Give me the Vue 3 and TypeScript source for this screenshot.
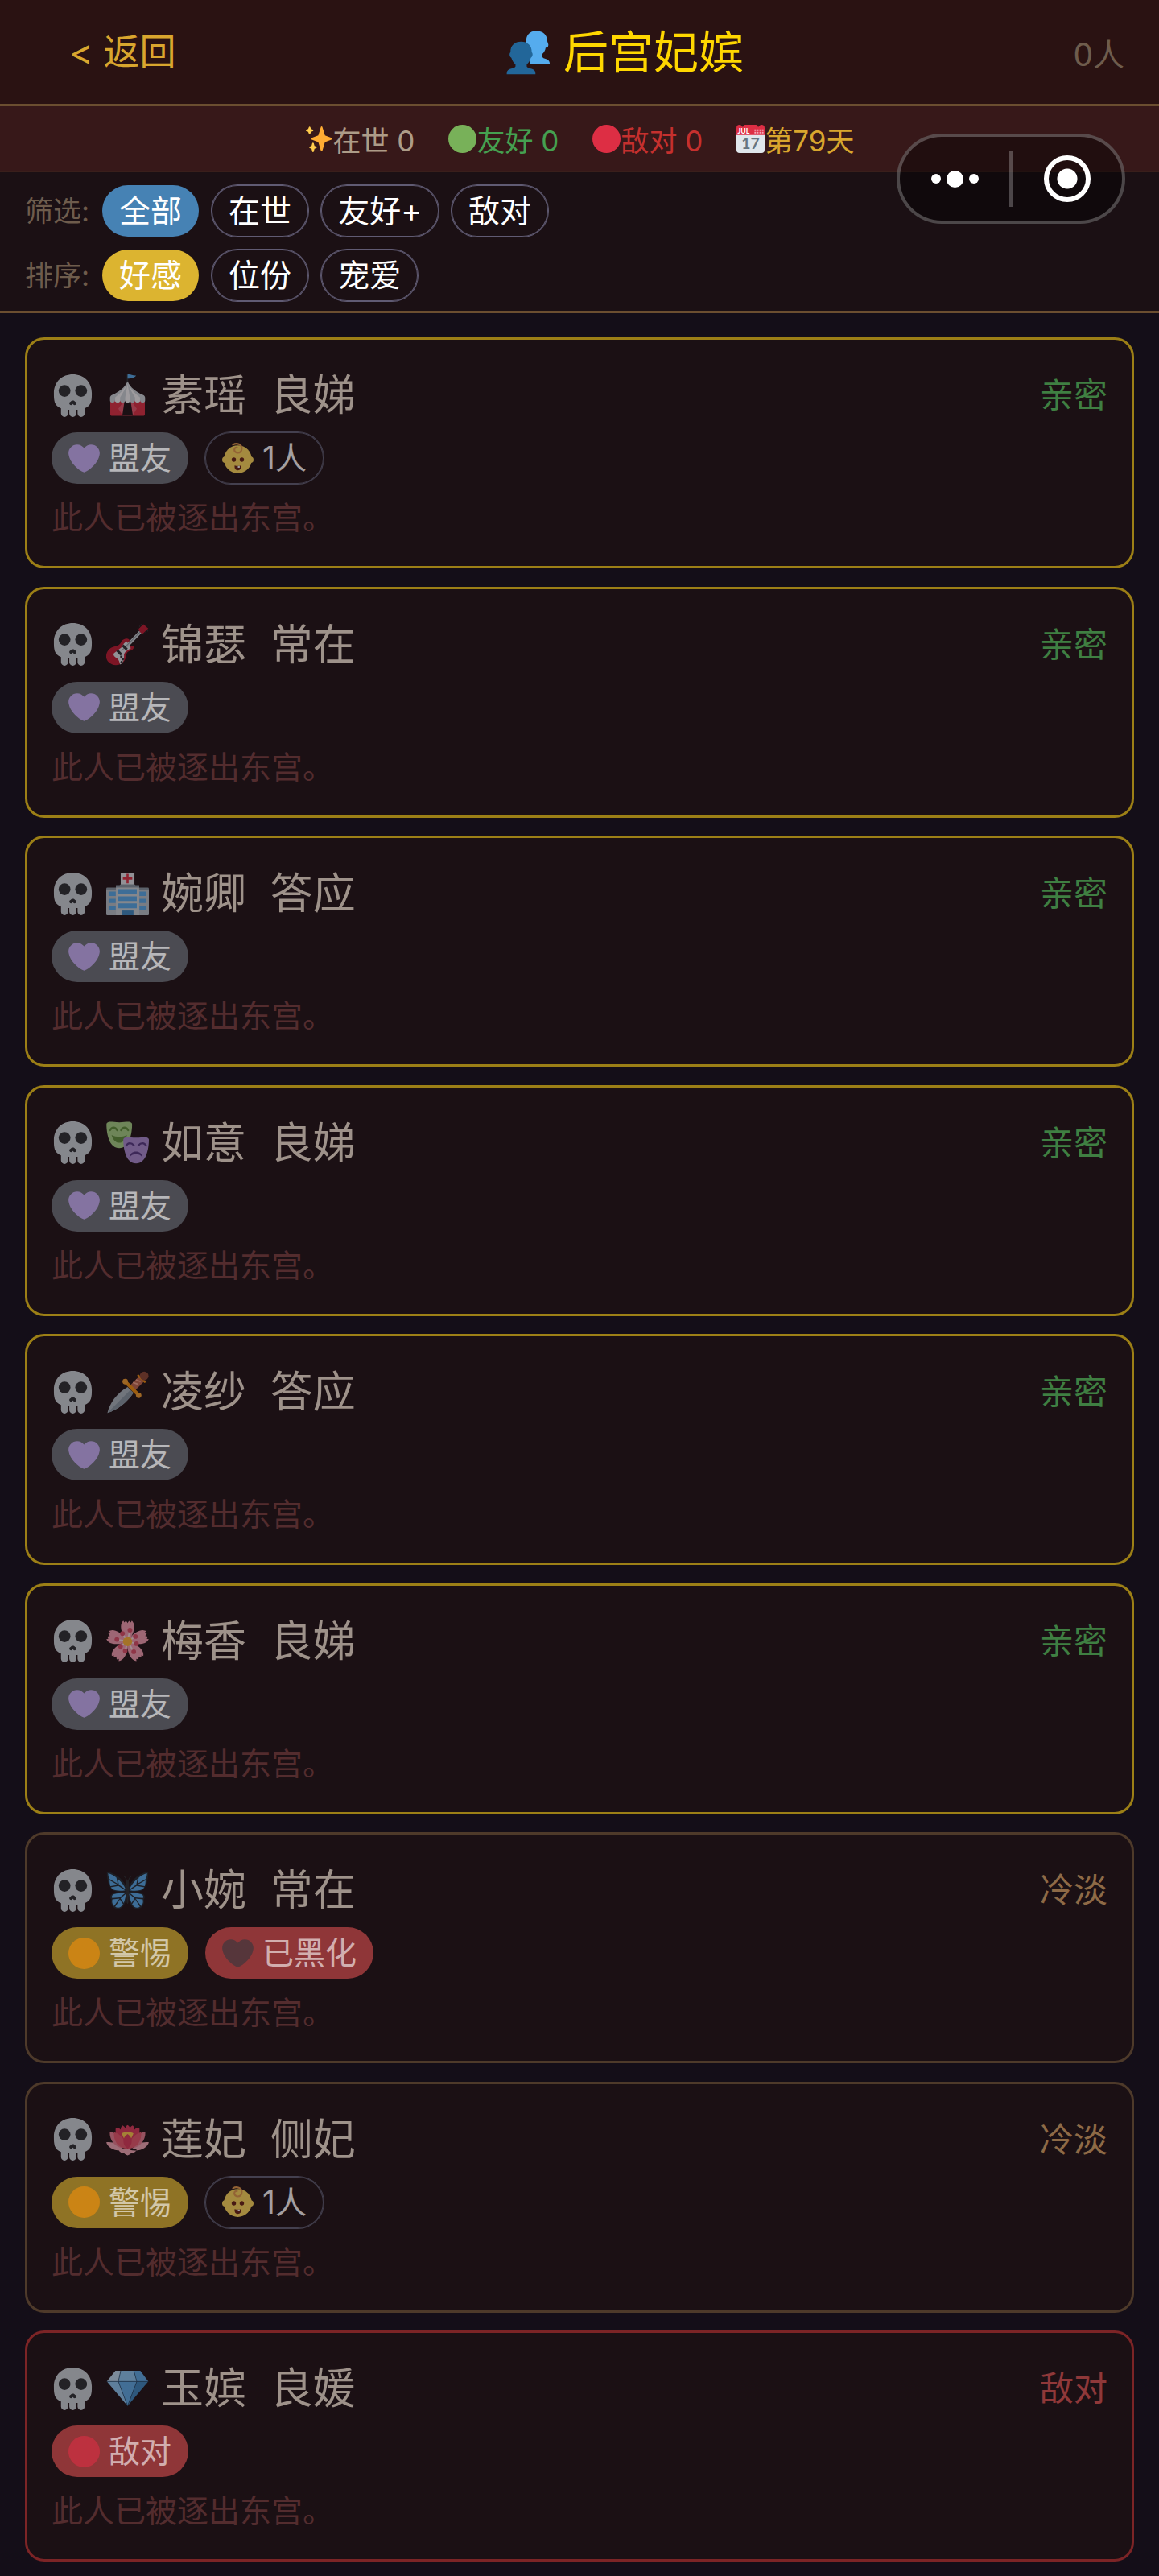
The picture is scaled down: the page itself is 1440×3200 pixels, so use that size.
<script setup lang="ts">
import { ref } from 'vue'

interface Tag {
  icon: string
  label: string
  tone: 'ally' | 'wary' | 'danger' | 'outline'
}

interface Consort {
  icon: string
  name: string
  rank: string
  mood: string
  level: 'close' | 'cold' | 'hostile'
  tags: Tag[]
}

const heart =
  'M35.885 11.833c0-5.45-4.418-9.868-9.867-9.868-3.308 0-6.227 1.633-8.018 4.129-1.791-2.496-4.71-4.129-8.017-4.129-5.45 0-9.868 4.417-9.868 9.868 0 .772.098 1.52.266 2.241C1.751 22.587 11.216 31.568 18 34.034c6.783-2.466 16.249-11.447 17.617-19.959.17-.721.268-1.469.268-2.242z'

const petal =
  'M18 18.5C13.500 14 11.500 7 12.800 3.400c.5-1.400 1-1.800 1.600-2.600l.9 1.500 1.200-1.300c.8.6 1.200 1 1.500 2 .3-1 .7-1.400 1.500-2l1.200 1.300.9-1.500c.6.8 1.100 1.200 1.600 2.600C24.500 7 22.500 14 18 18.500z'

const stamens = [
  [20, 8.8], [24.6, 14.2], [25.500, 20.300], [23.200, 27.100],
  [16, 26.400], [12, 22.500], [9, 16.700], [13.700, 11.700],
]

const wing = `
  <path fill="#1f2a33" d="M17.500 17.500C16.500 10 8 3 .6 2c-.3 5 1 14.500 6.600 16.500 3 .8 8 .4 10.300-.2z"/>
  <path fill="#1f2a33" d="M17.600 18.500c-4 .4-9 .6-12 1.800-2.800 1.500-2.400 4.400-1.200 5.200-1.200 3.500 1.200 8 5.600 8 4.500 0 6.800-6 7.600-12z"/>
  <g fill="#55acee">
    <path d="M1.600 3.400c2.800.7 5 2 7 3.700l1 5.200L2.500 8.200c-.6-1.600-.9-3.200-.9-4.800z"/>
    <path d="M9.600 7.900c3.200 2.800 5.800 6 6.700 9L10.700 13z"/>
    <path d="M2.800 9.400l7 3.900-6.300 1c-.5-1.600-.7-3.200-.7-4.900z"/>
    <path d="M3.900 15.200l6.400-1.100 5.600 3.800c-3 .5-6 .5-8.400-.2-1.700-.5-2.800-1.300-3.600-2.500z"/>
    <path d="M16.500 19.700l-5 4-6.500.6c-.7-1.400 0-2.600 1.500-3.200 2.500-1 6.500-1.100 10-1.400z"/>
    <path d="M5.200 25.500l6-.7-4.600 6.200c-1.500-1.400-2-3.500-1.400-5.500z"/>
    <path d="M16.700 20.800c-.5 3-1 5.500-2 7.700l-2.600-3.800z"/>
    <path d="M11.500 25.500l2.700 4c-1.600 2.800-4 3.700-6.600 2.300z"/>
  </g>`

const icons: Record<string, string> = {
  people: `
    <path fill="#55acee" d="M24.500 1C19.500 1 16.500 4 16.500 9.500L20 27.300h15.400c0-2.600-1.500-3.600-4.500-4.400-1-.4-1.800-1-1.600-3.400 1.400-1.400 2.500-3 2.800-5.200 1.400 0 2-.6 2.100-1.600C34.700 11.500 33.400 10 33.300 8.500 33.300 4 30 1 24.500 1z"/>
    <path fill="#226699" d="M12.500 9.500c-5 0-8.700 3-8.500 8.500-1 .5-1 3.500.7 4.300.8 2.500 1.900 4.200 3.300 5.400v1.600c-.5 1.200-2.800 1.400-4.800 2.200-1.700.7-2.200 2-2.200 4h23c0-2-.5-3.300-2.200-4-2-.8-4.300-1-4.800-2.200v-1.600c1.400-1.200 2.500-2.900 3.300-5.400 1.700-.8 1.700-3.800.7-4.300.2-5.500-3.500-8.500-8.500-8.500z"/>`,
  sparkles: `
    <path fill="#ffac33" d="M34.347 16.893l-8.899-3.294-3.323-10.891c-.128-.42-.517-.708-.956-.708-.439 0-.828.288-.956.708l-3.322 10.891-8.900 3.294c-.393.146-.653.519-.653.938 0 .418.260.793.653.938l8.895 3.293 3.324 11.223c.126.424.516.715.959.715.442 0 .833-.291.959-.716l3.324-11.223 8.896-3.293c.391-.144.652-.518.652-.937 0-.418-.261-.792-.653-.938z"/>
    <path fill="#ffcc4d" d="M14.347 27.894l-2.314-.856-.9-3.300c-.118-.436-.513-.738-.964-.738-.451 0-.846.302-.965.737l-.9 3.300-2.313.856c-.393.146-.653.520-.653.938 0 .418.260.793.653.938l2.301.853.907 3.622c.112.444.511.756.970.756.459 0 .858-.312.970-.757l.907-3.622 2.301-.853c.393-.144.653-.519.653-.937 0-.418-.260-.793-.653-.937zM10.009 6.231l-2.364-.875-.876-2.365c-.145-.393-.519-.653-.938-.653-.418 0-.792.260-.938.653l-.875 2.365-2.365.875c-.393.146-.653.520-.653.938 0 .418.260.793.653.938l2.365.875.875 2.365c.146.393.520.653.938.653.418 0 .792-.260.938-.653l.875-2.365 2.365-.875c.393-.146.653-.520.653-.938 0-.418-.260-.792-.653-.938z"/>`,
  green: '<circle cx="18" cy="18" r="18" fill="#78b159"/>',
  red: '<circle cx="18" cy="18" r="18" fill="#dd2e44"/>',
  orange: '<circle cx="18" cy="18" r="18" fill="#f4900c"/>',
  calendar: `
    <path fill="#e0e7ec" d="M0 10h36v22a4 4 0 0 1-4 4H4a4 4 0 0 1-4-4z"/>
    <path fill="#dd2e44" d="M4 0h1.500a2.500 2.500 0 0 0 5 0h15a2.500 2.500 0 0 0 5 0H32a4 4 0 0 1 4 4v9H0V4a4 4 0 0 1 4-4z"/>
    <g fill="#f4abba"><path d="M23 6h2v2h-2zM26.200 6h2v2h-2zM29.400 6h2v2h-2zM32.600 6h2v2h-2zM23 9h2v2h-2zM26.200 9h2v2h-2zM29.400 9h2v2h-2zM32.600 9h2v2h-2z"/></g>
    <text x="1.500" y="11.500" font-family="Lato, sans-serif" font-weight="700" font-size="9" fill="#fff">JUL</text>
    <text x="18" y="31" text-anchor="middle" font-family="Lato, sans-serif" font-weight="700" font-size="20" fill="#66757f">17</text>`,
  skull: `
    <path fill="#ccd6dd" d="M34 16C34 6 26.837 0 18 0 9.164 0 2 6 2 16c0 5.574.002 10.388 6 12.640V33c0 1.657 1.343 3 3 3s3-1.343 3-3v-3.155c.327.027.659.050 1 .070V33c0 1.657 1.343 3 3 3s3-1.343 3-3v-3.085c.342-.021.674-.043 1-.070V33c0 1.657 1.344 3 3 3 1.657 0 3-1.343 3-3v-4.360c5.998-2.252 6-7.066 6-12.640z"/>
    <g fill="#292f33"><circle cx="11" cy="14" r="5"/><circle cx="25" cy="14" r="5"/>
    <path d="M19.903 23.062C19.651 22.449 18.900 22 18 22s-1.652.449-1.903 1.062c-.632.176-1.097.750-1.097 1.438 0 .828.671 1.500 1.500 1.500.655 0 1.206-.422 1.410-1.007h.18c.204.585.756 1.007 1.410 1.007.828 0 1.500-.671 1.500-1.500 0-.688-.466-1.261-1.097-1.438z"/></g>`,
  purpleHeart: `<path fill="#aa8ed6" d="${heart}"/>`,
  blackHeart: `<path fill="#31373d" d="${heart}"/>`,
  baby: `
    <circle cx="3.500" cy="19.500" r="3.500" fill="#ffdc5d"/><circle cx="32.500" cy="19.500" r="3.500" fill="#ffdc5d"/>
    <circle cx="18" cy="19" r="16" fill="#ffdc5d"/>
    <path fill="none" stroke="#e39a4b" stroke-width="2" stroke-linecap="round" d="M12.500 2.200C17-.4 22.500 2 22.500 6.500c0 3-2 5-4.500 5-2.200 0-4-1.500-4-3.500s1.400-2.800 3-2.600"/>
    <circle cx="13.400" cy="19.400" r="2.500" fill="#662113"/><circle cx="22.600" cy="19.400" r="2.500" fill="#662113"/>
    <path fill="#662113" d="M14.300 26c2.500.8 5 .8 7.400 0 .3 3.500-1 5.500-3.700 5.500s-4-2-3.700-5.500z"/><path fill="#fff" d="M18 26.600h2.200v2H18z"/>`,
  tent: `
    <path fill="#292f33" d="M17.300 0h1.200v9h-1.200z"/><path fill="#55acee" d="M18 .2c2.500-.6 4 1 7.200.8-1.200 1.800-4 2.600-7.200 2.600z"/>
    <path fill="#dd2e44" d="M3.400 22h29.200v12a1 1 0 0 1-1 1H4.400a1 1 0 0 1-1-1z"/>
    <path fill="#ea596e" d="M14.500 23L10.200 29l3.800 6h8l3.800-6-4.300-6z"/>
    <path fill="#1b1014" d="M15.500 22h5L22.500 35h-9z"/>
    <path fill="#ccd6dd" d="M18 6c2.500 5.500 7.500 9 13 11.400 1.400.6 1.800 1.600 1.800 2.600v2c0 2.500-4 2.500-4.200 0-.2 2.500-4.200 2.500-4.300 0-.2 2.500-4.100 2.500-4.300 0-.2 2.500-3.800 2.500-4 0-.2 2.500-4.100 2.500-4.300 0-.1 2.500-4.100 2.500-4.300 0-.2 2.500-4.200 2.500-4.200 0v-2c0-1 .4-2 1.800-2.600C10.500 15 15.500 11.500 18 6z"/>
    <path fill="#f5f8fa" d="M18 6c-2 6-5 9-10.500 13.500v3.300c1.700 1.600 4.100 1 4.200-.8v-2.500C14.500 15 17 11 18 6zM18 6c2 6 5 9 10.500 13.500v3.300c-1.700 1.600-4.100 1-4.200-.8v-2.500C21.500 15 19 11 18 6zM18 8l2 11.500V22c-.2 2.400-3.800 2.400-4 0v-2.500z"/>`,
  guitar: `
    <path fill="#be1931" d="M16 13.300c2-.8 4 .2 3.600 1.800-.5 1.500-1 2 0 3.200 1.200 1.200 2.200.8 3.400.8.8 1.600-.4 3.600-2.600 4.200-2 .6-3 1.400-3.400 3.200-.6 3-1 5-3 7C10 36.500 5 36 2 33-1 30-.6 25 2.500 22c2-1.800 4-2 6.500-2.800 2.400-.8 3-2 3.600-3.400.6-1.200 1.600-2 3.400-2.500z"/>
    <path fill="#e1e8ed" d="M17.300 15.500c-2 1-3.300 2.600-3.800 4.500L6.500 25.500c-1.200 1.600.8 3.200 2.600 4.200 1.500 1.200 2 3 2.600 5.300 3.200-1.500 3.500-5 3.300-8.500 1-2.800 3.600-4 5.800-5.300z"/>
    <path stroke="#ccd6dd" stroke-width="2.600" d="M15.500 21.500L29 7.200"/><path stroke="#66757f" stroke-width=".6" d="M13 23.300L29 7.200"/>
    <path stroke="#292f33" stroke-width="2.200" d="M13.800 18.700l3.600 3.600M9.200 23l3.600 3.800"/>
    <g fill="#292f33"><circle cx="12.700" cy="28.500" r="1"/><circle cx="14" cy="30.500" r="1"/><circle cx="13" cy="33" r="1"/></g>
    <path stroke="#292f33" stroke-width="1" stroke-dasharray="1 1" d="M26.500 4.500L30 .7M31.500 9.500L35.500 6"/>
    <path fill="#be1931" d="M27.300 5l3.700-3.700c1.200-.8 1.800 1.500 4.500 3.200L30.800 9c-1.700-.3-3.200-1.800-3.500-4z"/>`,
  hospital: `
    <path fill="#8899a6" d="M0 13.500a1 1 0 0 1 1-1h34a1 1 0 0 1 1 1V35a1 1 0 0 1-1 1H1a1 1 0 0 1-1-1z"/>
    <path fill="#b8c5cd" d="M0 14.500h36V35a1 1 0 0 1-1 1H1a1 1 0 0 1-1-1z"/>
    <path fill="#e1e8ed" d="M13.200 0h9.600a1 1 0 0 1 1 1v10H12.200V1a1 1 0 0 1 1-1z"/>
    <path fill="#ccd6dd" d="M8.200 11h19.600v25H8.200z"/><path fill="#8899a6" d="M8.200 10.500h3L12.200 9.800h11.600l1 .7h3v2H8.200z"/>
    <path fill="#dd2e44" d="M17.100 1h1.800v3.100H22v1.800h-3.100V9h-1.800V5.900H14V4.100h3.100z"/>
    <path fill="#55acee" d="M10.200 14h15.600v4H10.200zM10.200 20h15.600v4H10.200zM10.200 26h15.600v4H10.200zM2 16h6v3.700H2zM28 16h6v3.700h-6zM2 22h6v3.700H2zM28 22h6v3.700h-6zM2 28h6v4H2zM28 28h6v4h-6z"/>
    <path fill="#3b88c3" d="M13 32h10v4H13z"/>`,
  masks: `
    <path fill="#a6d388" d="M2 .5C4 0 7 .8 11 .8S18 0 20 .5c1.600.4 2 1.500 1.800 3C21.500 12 19 22.500 11 22.500S.5 12 .2 3.500C0 2 .4.9 2 .5z"/>
    <path fill="none" stroke="#5c913b" stroke-width="1.600" stroke-linecap="round" d="M3.200 7.500c1.500-3 4.500-3 6 0M12.500 7.500c1.500-3 4.500-3 6 0"/>
    <path fill="#5c913b" d="M4.500 11.500c4 2 9 2 13 0-1 4-3.500 6.500-6.500 6.500s-5.500-2.500-6.500-6.500z"/>
    <path fill="#aa8ed6" d="M16.200 13.500c2-.5 5 .3 9 .3s7-.8 9-.3c1.600.4 2 1.500 1.800 3-.3 8.500-2.800 19-10.800 19s-10.500-10.500-10.800-19c-.2-1.500.2-2.600 1.800-3z"/>
    <path fill="none" stroke="#553986" stroke-width="1.500" stroke-linecap="round" d="M16.800 20.500c1.500-2.800 4.500-2.800 6.500-.3M27.200 20.200c2-2.500 5-2.500 6.500.3"/>
    <path fill="#553986" d="M19.500 30.500c.5-3.500 2.800-5 5.600-5s5.100 1.500 5.600 5c-1.800-2.200-3.400-2.800-5.600-2.800s-3.800.6-5.600 2.800z"/>`,
  dagger: `
    <path fill="#aab8c2" d="M18 13.500l5 5C17 27 10 32.500 1 35.500 2.500 27.500 9 18.500 18 13.500z"/>
    <path fill="#8899a6" d="M20.500 16l2.500 2.500C17 27 10 32.500 1 35.500z"/>
    <path stroke="#c1694f" stroke-width="6" d="M22 14.500l8.500-8.500"/>
    <path stroke="#f4a58c" stroke-width="1.200" d="M22.500 9.800l4.500 1.500M25 7.500l4 1.500"/>
    <path stroke="#f4900c" stroke-width="3" stroke-linecap="round" d="M16.500 9.500l10.700 10.700"/>
    <circle cx="16" cy="9" r="2.300" fill="#f4a030"/><circle cx="27.400" cy="20.600" r="2.300" fill="#f4a030"/>
    <path stroke="#f4900c" stroke-width="1.600" stroke-linecap="round" d="M27 3.800l5.500 5.500"/>
    <circle cx="32" cy="4.200" r="3.700" fill="#8a4633"/>`,
  blossom: `
    <g fill="#f4a0b4">${[0, 72, 144, 216, 288].map((a) => `<path transform="rotate(${a} 18 18.500)" d="${petal}"/>`).join('')}</g>
    <g stroke="#fbe0e4" stroke-width="1.300">${stamens.map(([x, y]) => `<path d="M18 18.500L${x} ${y}"/>`).join('')}</g>
    <g fill="#dd4f6a">${stamens.map(([x, y]) => `<circle cx="${x}" cy="${y}" r="2"/>`).join('')}</g>
    <circle cx="18" cy="18.500" r="3.900" fill="#ffb636"/>`,
  butterfly: `
    ${wing}<g transform="matrix(-1 0 0 1 36 0)">${wing}</g>
    <path fill="#292f33" d="M18 9.500c1.200 0 1.400 2 1.200 4L18.700 28c-.2 1.500-1.200 1.500-1.400 0l-.5-14.500c-.2-2 0-4 1.200-4z"/>
    <path fill="none" stroke="#292f33" stroke-width=".7" d="M17.500 10.500C17 8 16 6.500 14.500 5.500M18.500 10.500C19 8 20 6.500 21.500 5.500"/>`,
  lotus: `
    <path fill="#f4abba" d="M0 20.500c3-.4 6 0 8.500 1.500L16 27c-4 1-9 .6-12-1.500C2 24 .5 22.500 0 20.500zM36 20.500c-3-.4-6 0-8.500 1.500L20 27c4 1 9 .6 12-1.500 2-1.500 3.500-3 4-5zM10.500 26h15c.5 2-2.200 4-4.500 3.800-1 1-2 1.700-3 1.700s-2-.7-3-1.700c-2.300.2-5-1.800-4.500-3.800z"/>
    <path fill="#dd3a5c" d="M8 8.500c1.500-.6 3 0 4.200 1.300 0-1.600.5-2.700 1.500-3.600 1.200.6 2 1.300 2.300 2.600C16.300 7.300 17 6.500 18 6c1 .5 1.700 1.300 2 2.800.3-1.300 1.100-2 2.300-2.600 1 .9 1.500 2 1.500 3.600 1.200-1.300 2.700-1.900 4.200-1.300.6 4.500-1 9-4 12.500H12C9 17.500 7.400 13 8 8.500z"/>
    <path fill="#ffcc4d" d="M13 13c1.500-1.200 8.500-1.200 10 0l-2 4.500h-6z"/>
    <path fill="#ea7f93" d="M3 11.500c3 .2 6 2.500 7.500 6l3 8c-5-.8-11-6-10.500-14zM33 11.500c-3 .2-6 2.500-7.500 6l-3 8c5-.8 11-6 10.500-14z"/>
    <path fill="#ea596e" d="M6.500 12c5 1 10 6.500 11.500 14C9.500 25.500 6 19 6.500 12zM29.500 12c-5 1-10 6.500-11.500 14 8.500-.5 12-7 11.500-14z"/>
    <path fill="#dd3a5c" d="M18 13.500c2.200 1.500 3.500 3.500 3.500 6 0 3-1.500 5-3.500 6.500-2-1.500-3.500-3.500-3.500-6.500 0-2.500 1.300-4.500 3.500-6z"/>`,
  gem: `
    <path fill="#bdddf4" d="M7.700 2.700h4.500l-2 9.100H.5z"/><path fill="#8ccaf7" d="M12.200 2.700h11.100l2.500 9.100H10.200z"/>
    <path fill="#5dadec" d="M23.300 2.700h5.500l6.700 9.100h-9.700z"/><path fill="#8ccaf7" d="M.5 11.800h9.700L18 32.400z"/>
    <path fill="#5dadec" d="M10.200 11.800h15.600L18 32.400z"/><path fill="#3b88c3" d="M25.800 11.800h9.700L18 32.400z"/>
    <path fill="none" stroke="#1f4a6b" stroke-width=".5" d="M.5 11.800h35M12.200 2.700l-2 9.100L18 32.400l7.800-20.600-2.500-9.100"/>`,
}

const stats = [
  { icon: 'sparkles', text: '在世 0', tone: 'alive' },
  { icon: 'green', text: '友好 0', tone: 'friendly' },
  { icon: 'red', text: '敌对 0', tone: 'enemy' },
  { icon: 'calendar', text: '第79天', tone: 'day' },
]

const filters = ['全部', '在世', '友好+', '敌对']
const sorts = ['好感', '位份', '宠爱']
const activeFilter = ref('全部')
const activeSort = ref('好感')

const ally: Tag = { icon: 'purpleHeart', label: '盟友', tone: 'ally' }
const wary: Tag = { icon: 'orange', label: '警惕', tone: 'wary' }
const child: Tag = { icon: 'baby', label: '1人', tone: 'outline' }
const dark: Tag = { icon: 'blackHeart', label: '已黑化', tone: 'danger' }
const hostile: Tag = { icon: 'red', label: '敌对', tone: 'danger' }

const consorts: Consort[] = [
  { icon: 'tent', name: '素瑶', rank: '良娣', mood: '亲密', level: 'close', tags: [ally, child] },
  { icon: 'guitar', name: '锦瑟', rank: '常在', mood: '亲密', level: 'close', tags: [ally] },
  { icon: 'hospital', name: '婉卿', rank: '答应', mood: '亲密', level: 'close', tags: [ally] },
  { icon: 'masks', name: '如意', rank: '良娣', mood: '亲密', level: 'close', tags: [ally] },
  { icon: 'dagger', name: '凌纱', rank: '答应', mood: '亲密', level: 'close', tags: [ally] },
  { icon: 'blossom', name: '梅香', rank: '良娣', mood: '亲密', level: 'close', tags: [ally] },
  { icon: 'butterfly', name: '小婉', rank: '常在', mood: '冷淡', level: 'cold', tags: [wary, dark] },
  { icon: 'lotus', name: '莲妃', rank: '侧妃', mood: '冷淡', level: 'cold', tags: [wary, child] },
  { icon: 'gem', name: '玉嫔', rank: '良媛', mood: '敌对', level: 'hostile', tags: [hostile] },
]
</script>

<template>
  <div class="page">
    <header class="topbar">
      <button type="button" class="back">&lt; 返回</button>
      <h1 class="title">
        <svg class="emoji" viewBox="0 0 36 36" aria-hidden="true" v-html="icons.people"></svg>
        <span>后宫妃嫔</span>
      </h1>
      <span class="count">0人</span>
    </header>

    <div class="stats">
      <span v-for="s in stats" :key="s.text" class="stat" :class="s.tone">
        <svg class="emoji" viewBox="0 0 36 36" aria-hidden="true" v-html="icons[s.icon]"></svg>
        <span>{{ s.text }}</span>
      </span>
    </div>

    <section class="controls">
      <div class="control-row" role="group" aria-labelledby="filter-label">
        <span id="filter-label" class="control-label">筛选:</span>
        <button
          v-for="f in filters"
          :key="f"
          type="button"
          class="chip"
          :class="{ 'on-blue': f === activeFilter }"
          :aria-pressed="f === activeFilter"
          @click="activeFilter = f"
        >{{ f }}</button>
      </div>
      <div class="control-row" role="group" aria-labelledby="sort-label">
        <span id="sort-label" class="control-label">排序:</span>
        <button
          v-for="s in sorts"
          :key="s"
          type="button"
          class="chip"
          :class="{ 'on-gold': s === activeSort }"
          :aria-pressed="s === activeSort"
          @click="activeSort = s"
        >{{ s }}</button>
      </div>
    </section>

    <main class="list">
      <article v-for="c in consorts" :key="c.name" class="card" :class="c.level">
        <div class="card-head">
          <svg class="emoji dim" viewBox="0 0 36 36" aria-hidden="true" v-html="icons.skull"></svg>
          <svg class="emoji dim" viewBox="0 0 36 36" aria-hidden="true" v-html="icons[c.icon]"></svg>
          <h2 class="name">{{ c.name }}&nbsp; {{ c.rank }}</h2>
          <span class="mood">{{ c.mood }}</span>
        </div>
        <div class="tags">
          <span v-for="t in c.tags" :key="t.label" class="tag" :class="t.tone">
            <svg class="emoji dim" viewBox="0 0 36 36" aria-hidden="true" v-html="icons[t.icon]"></svg>
            <span class="dim">{{ t.label }}</span>
          </span>
        </div>
        <p class="note">此人已被逐出东宫。</p>
      </article>
    </main>

    <div class="capsule">
      <button type="button" class="capsule-btn" aria-label="更多">
        <i class="dot"></i><i class="dot big"></i><i class="dot"></i>
      </button>
      <i class="divider"></i>
      <button type="button" class="capsule-btn" aria-label="关闭">
        <i class="ring"></i>
      </button>
    </div>
  </div>
</template>

<style>
body {
  background: #140e18;
}
</style>

<style scoped>
.page {
  position: relative;
  box-sizing: border-box;
  display: flex;
  flex-direction: column;
  min-height: 100vh;
  background: #140e18;
  font-family: Inter, 'Noto Sans CJK SC', sans-serif;
  font-size: 39px;
  color: #fff;
}
button {
  margin: 0;
  padding: 0;
  border: 0;
  background: none;
  font: inherit;
  color: inherit;
  cursor: pointer;
}
h1,
h2,
p {
  margin: 0;
  font-weight: 400;
}
.emoji {
  display: block;
  flex: none;
  width: 1em;
  height: 1em;
}
.dim {
  opacity: 0.6;
}
.topbar {
  display: flex;
  align-items: center;
  justify-content: space-between;
  height: 129px;
  padding: 0 43px;
  border-bottom: 3px solid #6b4e30;
  background: #2a1212;
}
.back {
  padding-left: 43px;
  font-size: 45px;
  line-height: 64px;
  color: #d9a62e;
}
.title {
  display: flex;
  align-items: center;
  gap: 16px;
  font-size: 56px;
  line-height: 64px;
  color: #ffd700;
}
.count {
  color: #6e5c4c;
}
.stats {
  display: flex;
  align-items: center;
  justify-content: center;
  gap: 42px;
  height: 80px;
  border-bottom: 2px solid #3a1f1b;
  background: #371819;
  font-size: 35px;
}
.stat {
  display: flex;
  align-items: center;
}
.alive {
  color: #ad9c88;
}
.friendly {
  color: #45a050;
}
.enemy {
  color: #c5302e;
}
.day {
  color: #d9a62e;
}
.controls {
  display: flex;
  flex-direction: column;
  gap: 16px;
  padding: 16px 31px 12px;
  border-bottom: 3px solid #6b4e30;
  background: #1b1014;
}
.control-row {
  display: flex;
  align-items: center;
  gap: 16px;
}
.control-label {
  font-size: 35px;
  line-height: 64px;
  color: #6e5c4c;
}
.chip {
  padding: 0 21px;
  border-radius: 32px;
  line-height: 64px;
  box-shadow: 0 0 0 1px #605b73, inset 0 0 0 1px #605b73;
}
.chip.on-blue {
  background: #4682b4;
  box-shadow: none;
}
.chip.on-gold {
  background: #dcb430;
  box-shadow: none;
}
.list {
  display: flex;
  flex: 1;
  flex-direction: column;
  justify-content: space-between;
  gap: 22px;
  padding: 30px 31px 18px;
}
.card {
  padding: 38px 30px 35px;
  border: 3px solid #9c7f16;
  border-radius: 24px;
  background: #1b1014;
}
.card.cold {
  border-color: #4e3a2a;
}
.card.hostile {
  border-color: #7c2426;
}
.card-head {
  display: flex;
  align-items: center;
  gap: 15px;
  height: 62px;
  font-size: 53px;
}
.name {
  flex: 1;
  font-size: 53px;
  line-height: 62px;
  color: #9e928a;
}
.mood {
  font-size: 42px;
  line-height: 62px;
  color: #3f7f42;
}
.cold .mood {
  color: #8e6a46;
}
.hostile .mood {
  color: #8f3839;
}
.tags {
  display: flex;
  gap: 21px;
  margin-top: 15px;
}
.tag {
  display: flex;
  align-items: center;
  gap: 11px;
  padding: 0 21px;
  border-radius: 32px;
  line-height: 64px;
}
.tag.ally {
  background: #4b4b52;
}
.tag.wary {
  background: #8f7325;
}
.tag.danger {
  background: #8f3638;
}
.tag.outline {
  box-shadow: 0 0 0 1px #44404f, inset 0 0 0 1px #44404f;
}
.note {
  margin-top: 17px;
  line-height: 50px;
  color: #532c2e;
}
.capsule {
  position: absolute;
  top: 166px;
  right: 42px;
  box-sizing: border-box;
  display: flex;
  align-items: center;
  width: 284px;
  height: 112px;
  border: 4px solid rgba(255, 255, 255, 0.25);
  border-radius: 56px;
  background: rgba(0, 0, 0, 0.4);
}
.capsule-btn {
  display: flex;
  flex: 1;
  align-items: center;
  justify-content: center;
  gap: 7px;
  height: 100%;
}
.dot {
  width: 12px;
  height: 12px;
  border-radius: 50%;
  background: #fff;
}
.dot.big {
  width: 21px;
  height: 21px;
}
.divider {
  width: 4px;
  height: 70px;
  background: rgba(255, 255, 255, 0.25);
}
.ring {
  box-sizing: border-box;
  width: 58px;
  height: 58px;
  border: 6px solid #fff;
  border-radius: 50%;
  background: radial-gradient(circle, #fff 12px, transparent 13px);
}
</style>
